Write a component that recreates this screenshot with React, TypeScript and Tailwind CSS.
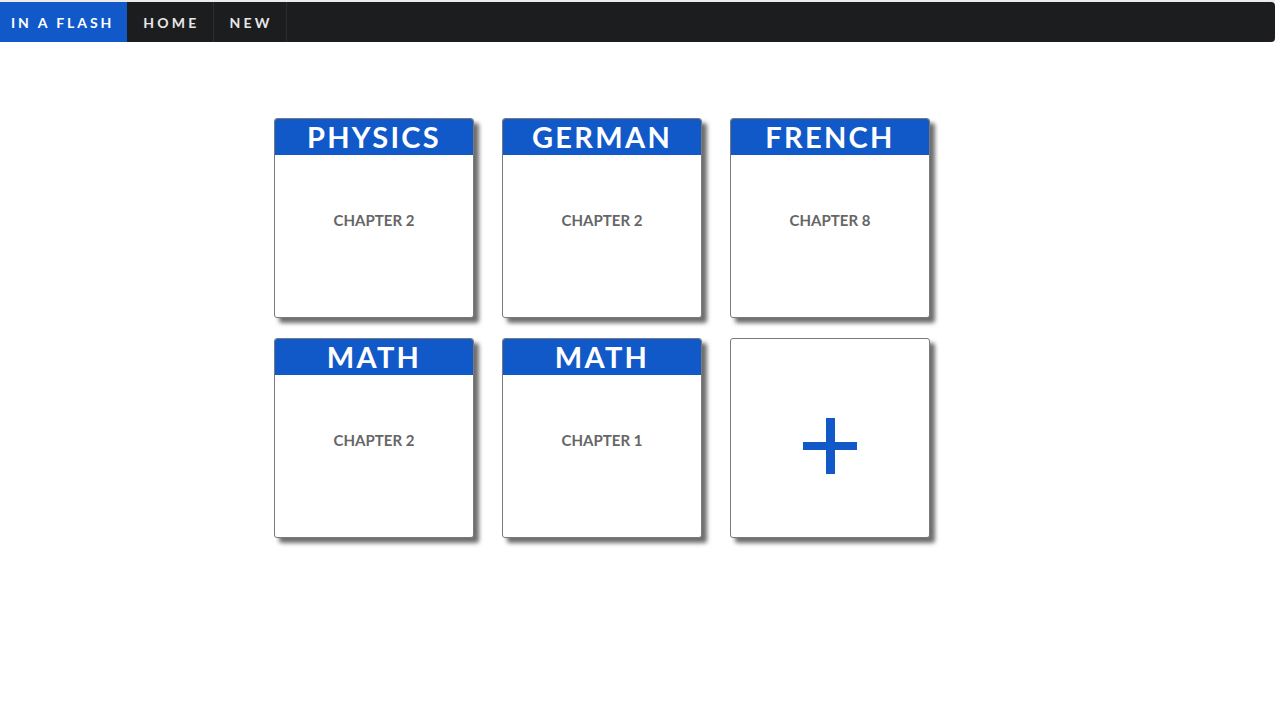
import React from "react";

const decks = [
  { title: "PHYSICS", chapter: "CHAPTER 2" },
  { title: "GERMAN", chapter: "CHAPTER 2" },
  { title: "FRENCH", chapter: "CHAPTER 8" },
  { title: "MATH", chapter: "CHAPTER 2" },
  { title: "MATH", chapter: "CHAPTER 1" },
];

export default function App() {
  return (
    <div className="min-h-[728px] bg-white" style={{ fontFamily: "Lato, 'Noto Sans', sans-serif" }}>
      <div className="pt-[2px] bg-[#ececec]">
        <nav className="flex h-[40px] bg-[#1c1d1f] rounded-r-[4px] overflow-hidden">
          <div className="flex items-center bg-[#1159c9] pl-[11px] pr-[13px] text-[14px] font-bold tracking-[0.21em] text-white">IN A FLASH</div>
          <div className="flex items-center border-r border-[#2c2d30] pl-[16px] pr-[13px] text-[14px] font-bold tracking-[0.23em] text-[#e8e8e8]">HOME</div>
          <div className="flex items-center border-r border-[#2c2d30] pl-[16px] pr-[13px] text-[14px] font-bold tracking-[0.23em] text-[#e8e8e8]">NEW</div>
        </nav>
      </div>
      <div className="pl-[274px] pt-[76px]">
        <div className="grid grid-cols-[200px_200px_200px] gap-x-[28px] gap-y-[20px]">
          {decks.map((d, i) => (
            <div key={i} className="flex h-[200px] w-[200px] flex-col overflow-hidden rounded-[3px] border border-[#7a7a7a] bg-white shadow-[5px_5px_4px_rgba(60,60,60,0.75)]">
              <div className="flex h-[36px] items-center justify-center bg-[#1159c9] pb-[2px] text-[29px] font-bold tracking-[0.08em] text-white leading-none">
                {d.title}
              </div>
              <div className="flex flex-1 items-start justify-center pt-[54px] text-[15px] font-bold text-[#666666]">
                {d.chapter}
              </div>
            </div>
          ))}
          <div className="flex h-[200px] w-[200px] items-center justify-center rounded-[3px] border border-[#7a7a7a] bg-white shadow-[5px_5px_4px_rgba(60,60,60,0.75)]">
            <svg width="56" height="58" viewBox="0 0 56 58" className="mt-[18px] ml-[1px]">
              <rect x="0" y="24" width="54" height="8" fill="#1159c9" />
              <rect x="23" y="0" width="9" height="56" fill="#1159c9" />
            </svg>
          </div>
        </div>
      </div>
    </div>
  );
}
